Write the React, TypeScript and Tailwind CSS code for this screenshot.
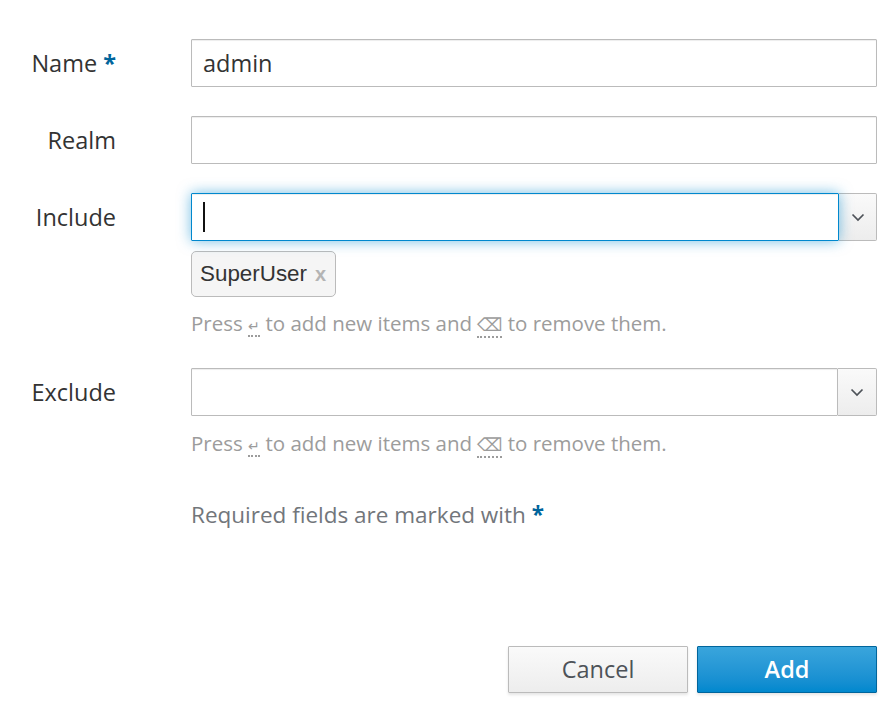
import React from "react";

const Chevron = () => (
  <svg width="14" height="9" viewBox="0 0 14 9" fill="none">
    <path d="M1.5 1.5 L7 7 L12.5 1.5" stroke="#4d5258" strokeWidth="1.7" />
  </svg>
);

const Helper = ({ className }: { className: string }) => (
  <div className={`text-[20.5px] leading-[28px] text-[#9c9c9c] ${className}`}>
    Press{" "}
    <abbr className="no-underline border-b-2 border-dotted border-[#9c9c9c] text-[14px] leading-none" title="Enter">
      ↵
    </abbr>{" "}
    to add new items and{" "}
    <abbr className="no-underline border-b-2 border-dotted border-[#9c9c9c] text-[18px] leading-none" title="Backspace">
      ⌫
    </abbr>{" "}
    to remove them.
  </div>
);

export default function App() {
  return (
    <div
      className="w-[891px] h-[720px] bg-white relative"
      style={{ fontFamily: '"Open Sans", "Liberation Sans", sans-serif' }}
    >
      <div className="pt-[39px] pr-[14px] flex flex-col">
        {/* Name */}
        <div className="flex items-center">
          <div className="w-[117px] text-right text-[23.5px] text-[#333] pr-[1px] pt-[2px]">
            Name <span className="text-[#00659c] font-bold">*</span>
          </div>
          <div className="ml-[74px] flex-1 h-[48px] border border-[#bbb] rounded-[1px] shadow-[inset_0_1px_1px_rgba(3,3,3,0.075)] flex items-center px-[11px] pt-[1px] text-[23.5px] text-[#333]">
            admin
          </div>
        </div>
        {/* Realm */}
        <div className="flex items-center mt-[29px]">
          <div className="w-[117px] text-right text-[23.5px] text-[#333] pr-[1px] pt-[2px]">Realm</div>
          <div className="ml-[74px] flex-1 h-[48px] border border-[#bbb] rounded-[1px] shadow-[inset_0_1px_1px_rgba(3,3,3,0.075)]" />
        </div>
        {/* Include */}
        <div className="flex mt-[29px]">
          <div className="w-[117px] h-[48px] flex items-center justify-end text-[23.5px] text-[#333] pr-[1px] pt-[2px]">
            Include
          </div>
          <div className="ml-[74px] flex-1 flex flex-col">
            <div className="flex h-[48px]">
              <div className="flex-1 border border-[#0088ce] rounded-[1px] shadow-[inset_0_1px_1px_rgba(3,3,3,0.075),0_0_14px_rgba(0,136,206,0.55)] flex items-center pl-[11px] relative z-10">
                <div className="w-[1.5px] h-[30px] bg-[#111]" />
              </div>
              <div className="w-[38px] border border-l-0 border-[#bbb] rounded-r-[2px] bg-gradient-to-b from-[#fafafa] to-[#ededed] flex items-center justify-center">
                <Chevron />
              </div>
            </div>
            <div className="mt-[10px] flex">
              <div
                className="h-[46px] border border-[#bbb] rounded-[5px] bg-[#f5f5f5] flex items-center pl-[8px] pr-[9px] text-[22.4px] text-[#333]"
                style={{ fontFamily: '"Liberation Sans", Arial, sans-serif' }}
              >
                SuperUser
                <span className="ml-[8px] text-[#b4b4b4] font-bold text-[20px]">x</span>
              </div>
            </div>
            <Helper className="mt-[12px]" />
          </div>
        </div>
        {/* Exclude */}
        <div className="flex mt-[31px]">
          <div className="w-[117px] h-[48px] flex items-center justify-end text-[23.5px] text-[#333] pr-[1px] pt-[2px]">
            Exclude
          </div>
          <div className="ml-[74px] flex-1 flex flex-col">
            <div className="flex h-[48px]">
              <div className="flex-1 border border-[#bbb] rounded-[1px] shadow-[inset_0_1px_1px_rgba(3,3,3,0.075)]" />
              <div className="w-[39px] border border-l-0 border-[#bbb] rounded-r-[2px] bg-gradient-to-b from-[#fafafa] to-[#ededed] flex items-center justify-center">
                <Chevron />
              </div>
            </div>
            <Helper className="mt-[13px]" />
            <div className="mt-[42px] text-[22.5px] leading-[32px] text-[#72767b]">
              Required fields are marked with{" "}
              <span className="text-[#00659c] font-bold">*</span>
            </div>
          </div>
        </div>
        {/* Buttons */}
        <div className="flex justify-end gap-[9px] mt-[115px]">
          <button className="w-[180px] h-[47px] border border-[#bbb] rounded-[1px] bg-gradient-to-b from-[#fafafa] to-[#ededed] shadow-[0_2px_3px_rgba(3,3,3,0.1)] text-[23.5px] text-[#4d5258]">
            Cancel
          </button>
          <button className="w-[180px] h-[47px] border border-[#00659c] rounded-[1px] bg-gradient-to-b from-[#39a5dc] to-[#0088ce] shadow-[0_2px_3px_rgba(3,3,3,0.1)] text-[23.5px] text-white font-semibold">
            Add
          </button>
        </div>
      </div>
    </div>
  );
}
